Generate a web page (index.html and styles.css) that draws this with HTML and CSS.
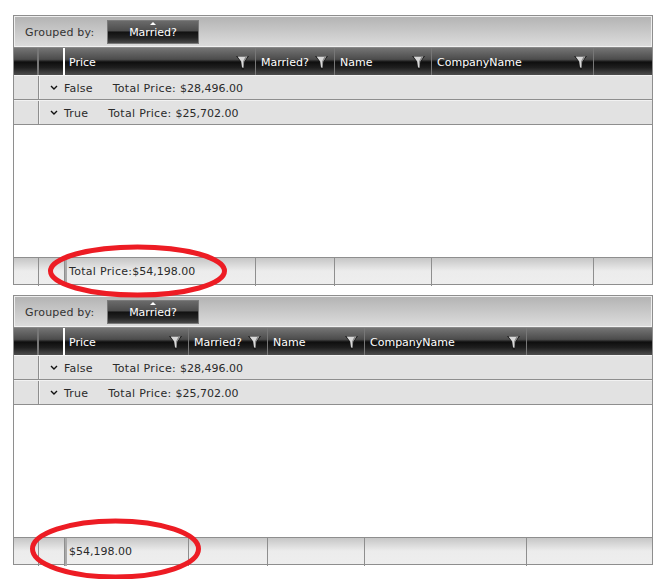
FILE: index.html
```html
<!DOCTYPE html>
<html lang="en">

<head>
  <meta charset="UTF-8">
  <title>Grouped grid footer</title>
  <link rel="stylesheet" href="styles.css">
</head>

<body>
  <svg width="0" height="0" class="defs">
    <symbol id="funnel" viewBox="0 0 13 15">
      <path d="M0 1h13l-4 5.500-1.500 8.500-2-1-1-7.500z" fill="#1a1a1a" />
      <path d="M1.500 1.500h10l-3.500 5-.7 6.500-1.300-.8-.8-5.700z" fill="#d8d8d8" />
      <path d="M8.200 6.500l3.300-5h-2l-2.500 5 .2 6 .4.300z" fill="#8a8a8a" />
    </symbol>
  </svg>

  <div class="grid first">
    <div class="group-bar">
      <span class="group-label">Grouped by:</span>
      <span class="group-chip"><i class="sort-up"></i>Married?</span>
    </div>
    <div class="row head">
      <div class="cell"></div>
      <div class="cell"></div>
      <div class="cell price"><span>Price</span><svg class="funnel"><use href="#funnel" /></svg></div>
      <div class="cell"><span>Married?</span><svg class="funnel"><use href="#funnel" /></svg></div>
      <div class="cell"><span>Name</span><svg class="funnel"><use href="#funnel" /></svg></div>
      <div class="cell"><span>CompanyName</span><svg class="funnel"><use href="#funnel" /></svg></div>
      <div class="cell"></div>
    </div>
    <div class="group-row">
      <div class="indent"></div>
      <div class="group-text"><svg class="chevron" viewBox="0 0 8 5"><path d="M1 1l3 3 3-3" /></svg><span class="key">False</span><span class="label">Total Price:</span><span>$28,496.00</span></div>
    </div>
    <div class="group-row">
      <div class="indent"></div>
      <div class="group-text"><svg class="chevron" viewBox="0 0 8 5"><path d="M1 1l3 3 3-3" /></svg><span class="key">True</span><span class="label">Total Price:</span><span>$25,702.00</span></div>
    </div>
    <div class="blank"></div>
    <div class="row foot">
      <div class="cell"></div>
      <div class="cell"></div>
      <div class="cell price"><span class="label tight">Total Price:</span>$54,198.00</div>
      <div class="cell"></div>
      <div class="cell"></div>
      <div class="cell"></div>
      <div class="cell"></div>
    </div>
  </div>

  <div class="grid second">
    <div class="group-bar">
      <span class="group-label">Grouped by:</span>
      <span class="group-chip"><i class="sort-up"></i>Married?</span>
    </div>
    <div class="row head">
      <div class="cell"></div>
      <div class="cell"></div>
      <div class="cell price"><span>Price</span><svg class="funnel"><use href="#funnel" /></svg></div>
      <div class="cell"><span>Married?</span><svg class="funnel"><use href="#funnel" /></svg></div>
      <div class="cell"><span>Name</span><svg class="funnel"><use href="#funnel" /></svg></div>
      <div class="cell"><span>CompanyName</span><svg class="funnel"><use href="#funnel" /></svg></div>
      <div class="cell"></div>
    </div>
    <div class="group-row">
      <div class="indent"></div>
      <div class="group-text"><svg class="chevron" viewBox="0 0 8 5"><path d="M1 1l3 3 3-3" /></svg><span class="key">False</span><span class="label">Total Price:</span><span>$28,496.00</span></div>
    </div>
    <div class="group-row">
      <div class="indent"></div>
      <div class="group-text"><svg class="chevron" viewBox="0 0 8 5"><path d="M1 1l3 3 3-3" /></svg><span class="key">True</span><span class="label">Total Price:</span><span>$25,702.00</span></div>
    </div>
    <div class="blank"></div>
    <div class="row foot">
      <div class="cell"></div>
      <div class="cell"></div>
      <div class="cell price">$54,198.00</div>
      <div class="cell"></div>
      <div class="cell"></div>
      <div class="cell"></div>
      <div class="cell"></div>
    </div>
  </div>

  <!-- red marks drawn over the screenshot -->
  <svg class="marks" width="666" height="579">
    <ellipse cx="137.500" cy="271" rx="87" ry="24" />
    <ellipse cx="115.500" cy="549" rx="83" ry="28" />
  </svg>
</body>

</html>
```

FILE: styles.css
```css
* {
  box-sizing: border-box;
  padding: 0;
  margin: 0;
}

html,
body {
  height: 579px;
  overflow: hidden;
}

body {
  position: relative;
  padding: 15px 13px 0;
  background: #fff;
  color: #2a2a2a;
  font: 11px "DejaVu Sans", Verdana, sans-serif;
}

.defs {
  position: absolute;
}

.grid {
  display: flex;
  flex-direction: column;
  width: 640px;
  height: 270px;
  margin-bottom: 10px;
  border: 1px solid #8e8e8e;
}

.first {
  --cols: 25px 26px 191px 79px 97px 162px 1fr;
}

.second {
  --cols: 25px 26px 124px 79px 97px 162px 1fr;
}

.group-bar {
  display: flex;
  align-items: center;
  flex: none;
  height: 31px;
  padding: 2px 0 0 11px;
  border: 1px solid #eee;
  border-bottom: 1px solid #f2f2f2;
  background: linear-gradient(#b4b4b4, #dcdcdc);
}

.group-label {
  width: 82px;
  margin-left: -1px;
  color: #333;
  letter-spacing: .2px;
}

.group-chip {
  position: relative;
  width: 92px;
  height: 24px;
  margin-top: -2px;
  border: 1px solid #7a7a7a;
  background: linear-gradient(#6a6a6a 0, #4d4d4d 45%, #111 50%, #222 75%, #484848 100%);
  color: #fff;
  line-height: 24px;
  text-align: center;
}

.sort-up {
  position: absolute;
  top: 1px;
  left: 42px;
  border: 3px solid transparent;
  border-top: 0;
  border-bottom: 3px solid #fff;
}

.row {
  display: grid;
  flex: none;
  grid-template-columns: var(--cols);
}

.head {
  height: 28px;
  border-top: 1px solid #8a8a8a;
  background: linear-gradient(#747474 0, #4c4c4c 42%, #0e0e0e 52%, #1e1e1e 72%, #4e4e4e 100%);
  color: #fff;
}

.head .cell {
  display: flex;
  align-items: center;
  justify-content: space-between;
  padding: 1px 6px 0 5px;
  border-right: 1px solid #777;
}

.head .cell:first-child {
  border-right: 2px solid #777;
}

.head .cell:nth-child(2) {
  border-right: 2px solid #fff;
}

.head .price {
  padding-left: 4px;
}

.head .cell:last-child {
  border-right: 0;
}

.funnel {
  flex: none;
  width: 13px;
  height: 15px;
}

.group-row {
  display: flex;
  flex: none;
  height: 25px;
  border-top: 1px solid #f2f2f2;
  border-bottom: 1px solid #8e8e8e;
  background: #e2e2e2;
}

.indent {
  width: 25px;
  border-right: 1px solid #8e8e8e;
}

.group-text {
  display: flex;
  align-items: center;
  padding: 1px 0 0 10px;
  border-left: 1px solid #f2f2f2;
}

.chevron {
  width: 8px;
  height: 5px;
  margin: -2px 6px 0 0;
  fill: none;
  stroke: #111;
  stroke-width: 1.400;
}

.key {
  margin-right: 20px;
  letter-spacing: .2px;
}

.label {
  margin-right: 4px;
  letter-spacing: .3px;
}

.label.tight {
  margin-right: 0;
}

.blank {
  flex: 1;
  background: #fff;
}

.foot {
  height: 27px;
  border-top: 1px solid #8e8e8e;
  background: linear-gradient(#c6c6c6 0, #ececec 50%, #eee 100%);
  line-height: 28px;
}

.foot .cell {
  padding-left: 5px;
  border-right: 1px solid #8e8e8e;
}

.foot .cell:last-child {
  border-right: 0;
}

.foot .price {
  padding-left: 2px;
  border-left: 2px solid #aaa;
}

.marks {
  position: absolute;
  top: 0;
  left: 0;
  fill: none;
  stroke: #ed1c24;
  stroke-width: 5;
}
```
